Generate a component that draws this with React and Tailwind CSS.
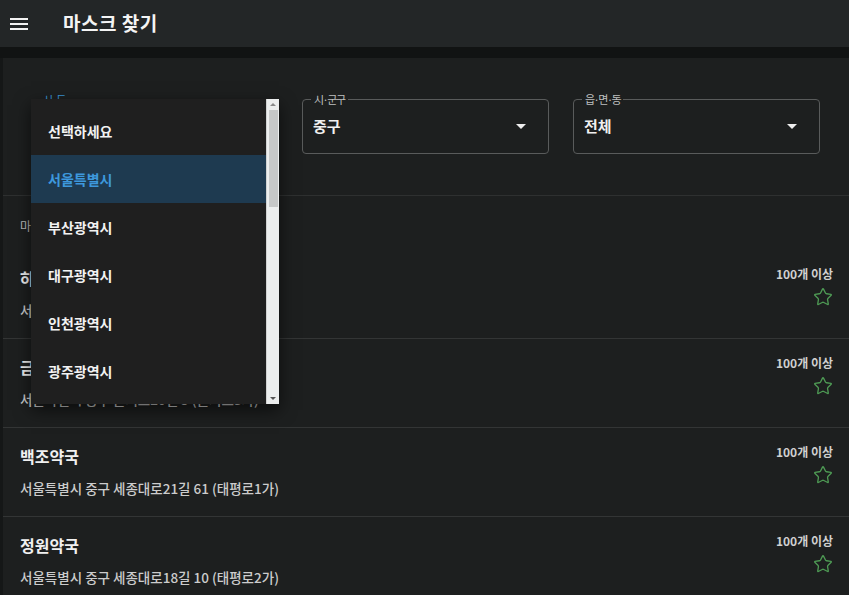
import { Star } from 'lucide-react';

const regions = ['선택하세요', '서울특별시', '부산광역시', '대구광역시', '인천광역시', '광주광역시'];

const stores = [
  { name: '하나약국', addr: '서울특별시 중구 을지로 120 (을지로2가)' },
  { name: '금강약국', addr: '서울특별시 중구 을지로20길 5 (을지로3가)' },
  { name: '백조약국', addr: '서울특별시 중구 세종대로21길 61 (태평로1가)' },
  { name: '정원약국', addr: '서울특별시 중구 세종대로18길 10 (태평로2가)' },
];

function OutlinedSelect({ label, value, focused }) {
  return (
    <div
      className={`relative h-[55px] rounded-[4px] border ${
        focused ? 'border-[#2d7fc1]' : 'border-[#595b5b]'
      } flex items-center justify-between pl-[10px] pr-[22px]`}
    >
      <span
        className={`absolute -top-[8px] left-[8px] px-[3px] bg-[#1d1f1f] text-[11px] leading-[14px] tracking-[-1.5px] ${
          focused ? 'text-[#3a95d8]' : 'text-[#bdbfbf]'
        }`}
      >
        {label}
      </span>
      <span className="text-[15px] font-bold text-[#f0f0f0]">{value}</span>
      <span className="w-0 h-0 border-l-[5px] border-r-[5px] border-t-[5px] border-l-transparent border-r-transparent border-t-[#eeeeee]" />
    </div>
  );
}

function RegionMenu() {
  return (
    <div className="absolute left-[31px] top-[99px] w-[248px] h-[305px] bg-[#1f1f1f] shadow-[0_6px_16px_rgba(0,0,0,0.6)] flex">
      <div className="flex-1 pt-[8px]">
        {regions.map((r, i) => (
          <div
            key={r}
            className={`h-[48px] flex items-center pl-[17px] text-[14px] font-bold ${
              i === 1 ? 'bg-[#1e3a50] text-[#3d98dc]' : 'text-[#f2f2f2]'
            }`}
          >
            {r}
          </div>
        ))}
      </div>
      <div className="w-[13px] bg-[#eceeee] border-l border-[#d0d2d2] flex flex-col items-center">
        <span className="mt-[4px] w-0 h-0 border-l-[3px] border-r-[3px] border-b-[3px] border-l-transparent border-r-transparent border-b-[#8a8a8a]" />
        <div className="mt-[4px] w-[9px] h-[97px] bg-[#c6c8c8]" />
        <div className="flex-1" />
        <span className="mb-[4px] w-0 h-0 border-l-[3px] border-r-[3px] border-t-[3px] border-l-transparent border-r-transparent border-t-[#555555]" />
      </div>
    </div>
  );
}

export default function App() {
  return (
    <div
      className="relative w-[849px] h-[595px] overflow-hidden bg-[#151717]"
      style={{ fontFamily: '"Noto Sans CJK KR", "Noto Sans", sans-serif' }}
    >
      <header className="h-[47px] bg-[#232627] flex items-center">
        <div className="ml-[10px] w-[18px] flex flex-col gap-[3px]">
          <span className="h-[2px] bg-[#f2f2f2]" />
          <span className="h-[2px] bg-[#f2f2f2]" />
          <span className="h-[2px] bg-[#f2f2f2]" />
        </div>
        <h1 className="ml-[35px] text-[19px] font-bold text-[#f4f4f4] tracking-[0.5px]">마스크 찾기</h1>
      </header>
      <div className="h-[11px] bg-[#111313]" />

      <main className="ml-[3px] bg-[#1d1f1f] h-[537px]">
        <section className="grid grid-cols-3 gap-[24px] pl-[28px] pr-[29px] pt-[41px] pb-[41px] border-b border-[#2e3030]">
          <OutlinedSelect label="시·도" value="서울특별시" focused />
          <OutlinedSelect label="시·군구" value="중구" />
          <OutlinedSelect label="읍·면·동" value="전체" />
        </section>

        <p className="pl-[17px] pt-[20px] pb-[14px] text-[12px] leading-[20px] text-[#bbbbbb]">마스크 판매처 목록</p>

        <ul>
          {stores.map((s, i) => (
            <li
              key={s.name}
              className={`h-[89px] flex justify-between pl-[17px] pr-[16px] ${
                i < stores.length - 1 ? 'border-b border-[#333535]' : ''
              }`}
            >
              <div className="pt-[17px]">
                <p className="text-[16px] leading-[22px] font-bold text-[#f0f0f0]">{s.name}</p>
                <p className="mt-[11px] text-[13.5px] leading-[20px] font-medium text-[#cccccc]">{s.addr}</p>
              </div>
              <div className="pt-[16px] flex flex-col items-end">
                <span className="text-[12px] leading-[16px] font-bold text-[#d0d0d0]">100개 이상</span>
                <Star className="mt-[5px] w-[20px] h-[20px] text-[#4e9a54]" strokeWidth={1.6} />
              </div>
            </li>
          ))}
        </ul>
      </main>

      <RegionMenu />
    </div>
  );
}
